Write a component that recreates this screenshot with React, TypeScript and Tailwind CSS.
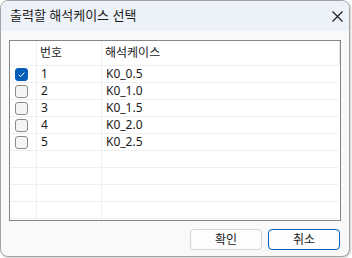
import { useState } from 'react';

const FONT = { fontFamily: '"Noto Sans", "Noto Sans CJK KR", sans-serif' };

const cases = [
  { no: 1, name: 'K0_0.5' },
  { no: 2, name: 'K0_1.0' },
  { no: 3, name: 'K0_1.5' },
  { no: 4, name: 'K0_2.0' },
  { no: 5, name: 'K0_2.5' },
];

function Check({ on, onClick }: { on: boolean; onClick: () => void }) {
  return (
    <button
      type="button"
      onClick={onClick}
      className={`w-[13px] h-[13px] rounded-[3px] flex items-center justify-center ${
        on ? 'bg-[#005fb8] border border-[#005fb8]' : 'bg-[#f5f5f5] border border-[#8b8b8b]'
      }`}>
      {on && (
        <svg width="9" height="9" viewBox="0 0 9 9">
          <path d="M1.8 4.8 L3.7 6.6 L7.3 2.6" fill="none" stroke="#fff" strokeWidth="1" />
        </svg>
      )}
    </button>
  );
}

export default function App() {
  const [checked, setChecked] = useState<number[]>([1]);
  const toggle = (n: number) =>
    setChecked(prev => (prev.includes(n) ? prev.filter(x => x !== n) : [...prev, n]));

  const empty = Array.from({ length: 5 });

  return (
    <div className="w-[352px] h-[258px] bg-white" style={FONT}>
      <div className="w-[350px] h-[257px] rounded-lg border border-[#a3a3a3] bg-[#f9f9f9] overflow-hidden flex flex-col shadow-[1px_1px_2px_rgba(0,0,0,0.2)]">
        {/* Title bar */}
        <div className="h-[30px] shrink-0 bg-[#edf2f9] flex items-center justify-between pl-[9px] pr-[6px]">
          <span className="text-[13px] text-[#1a1a1a]">출력할 해석케이스 선택</span>
          <svg width="11" height="11" viewBox="0 0 11 11">
            <path d="M0.5 0.5 L10.5 10.5 M10.5 0.5 L0.5 10.5" stroke="#1a1a1a" strokeWidth="1.1" />
          </svg>
        </div>

        <div className="flex-1 flex flex-col px-[8px] pt-[9px]">
          {/* Grid */}
          <div className="w-[332px] h-[181px] border border-[#868686] bg-white flex overflow-hidden text-[12px] text-[#1a1a1a]">
            <div className="w-[328px] flex flex-col">
              <div className="h-[25px] shrink-0 flex border-b border-[#efefef]">
                <div className="w-[27px] border-r border-[#efefef]" />
                <div className="w-[65px] border-r border-[#efefef] pl-[3px] flex items-center">번호</div>
                <div className="flex-1 pl-[3px] flex items-center">해석케이스</div>
              </div>
              {cases.map(c => (
                <div key={c.no} className="h-[17px] shrink-0 flex border-b border-[#efefef]">
                  <div className="w-[27px] border-r border-[#efefef] flex items-center pl-[5px]">
                    <Check on={checked.includes(c.no)} onClick={() => toggle(c.no)} />
                  </div>
                  <div className="w-[65px] border-r border-[#efefef] pl-[4px] flex items-center">{c.no}</div>
                  <div className="flex-1 pl-[4px] flex items-center">{c.name}</div>
                </div>
              ))}
              {empty.map((_, i) => (
                <div key={i} className="h-[17px] shrink-0 flex border-b border-[#efefef]">
                  <div className="w-[27px] border-r border-[#efefef]" />
                  <div className="w-[65px] border-r border-[#efefef]" />
                  <div className="flex-1" />
                </div>
              ))}
            </div>
            <div className="flex-1 flex flex-col">
              <div className="h-[24px] w-[1px] ml-[1px] bg-[#e3e3e3]" />
            </div>
          </div>

          {/* Buttons */}
          <div className="flex justify-end gap-[6px] mt-[8px] pr-[1px] text-[12px] text-[#1a1a1a]">
            <button type="button" className="w-[72px] h-[21px] rounded-[4px] border border-[#d4d4d4] bg-[#fdfdfd] flex items-center justify-center">
              확인
            </button>
            <button type="button" className="w-[72px] h-[21px] rounded-[4px] border border-[#005fb8] bg-[#fdfdfd] flex items-center justify-center">
              취소
            </button>
          </div>
        </div>
      </div>
    </div>
  );
}
